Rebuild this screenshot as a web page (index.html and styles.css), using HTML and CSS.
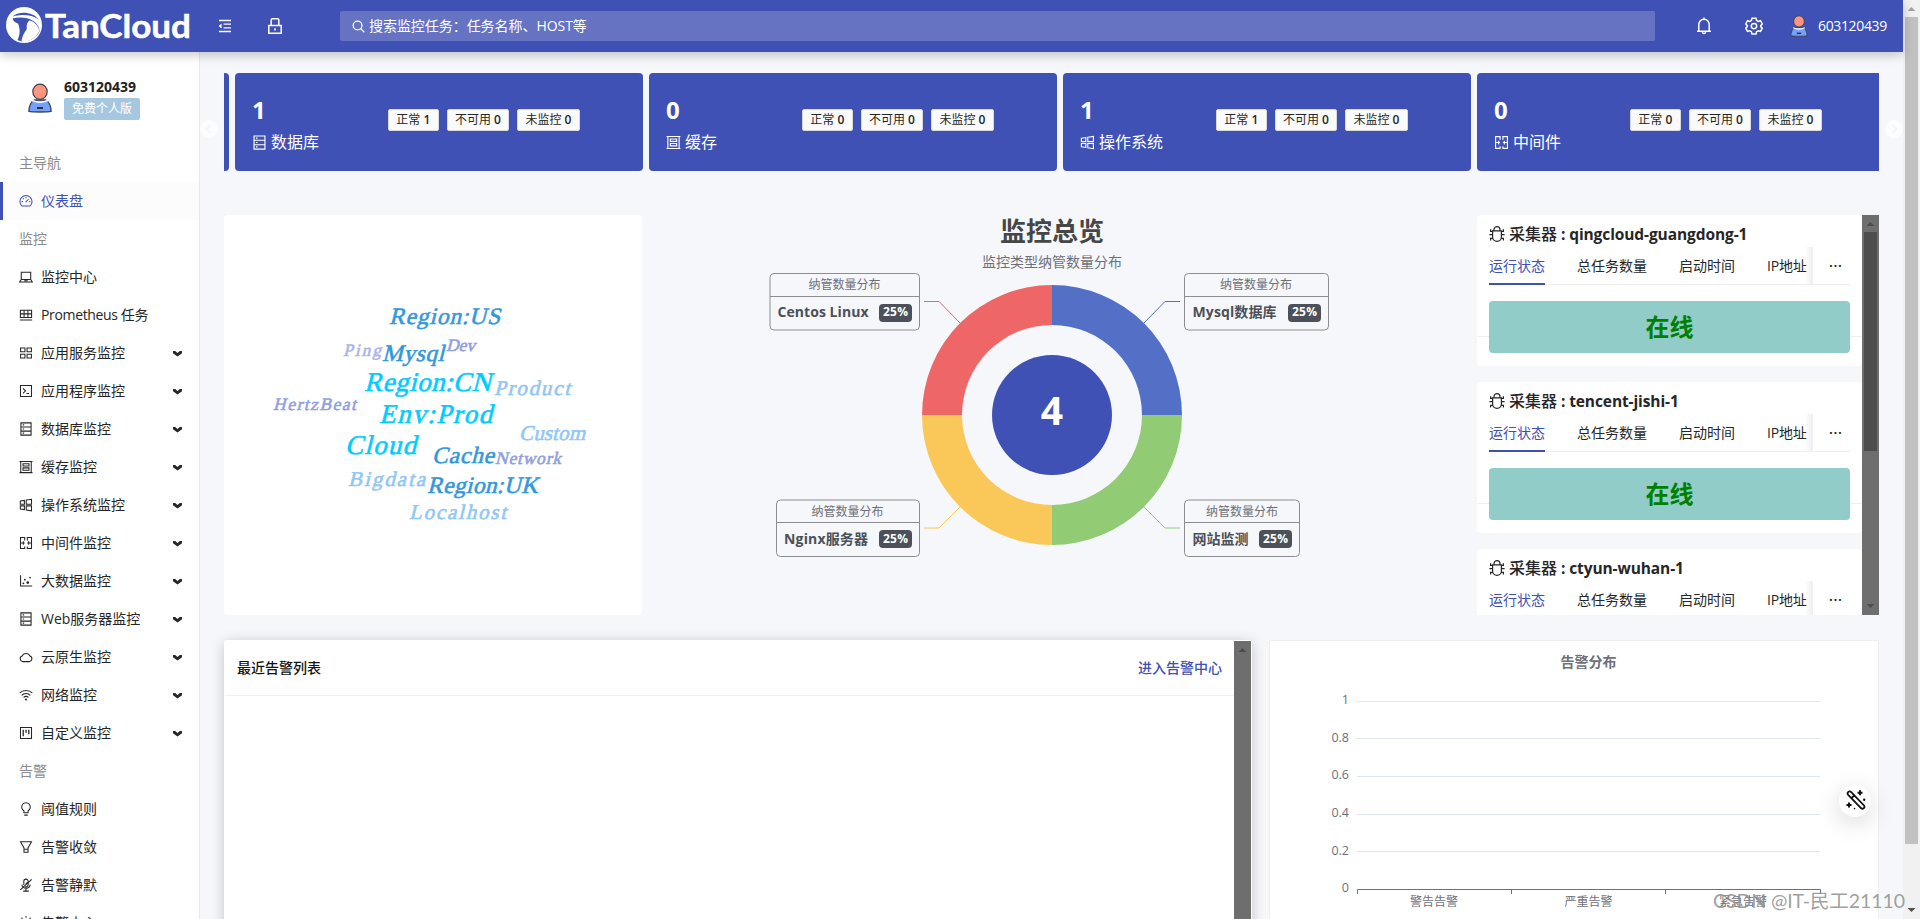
FILE: index.html
```html
<!DOCTYPE html>
<html lang="zh-CN">
<head>
<meta charset="utf-8">
<title>TanCloud</title>
<link rel="stylesheet" href="styles.css">
</head>
<body>
<svg class="defs" width="0" height="0">
  <defs>
    <symbol id="i-dash" viewBox="0 0 16 16"><path d="M3.3 13.7a6.9 6.9 0 1 1 9.4 0z"/><path d="M7.6 9.4 10.8 6M8 3.2v1.6M3 8.7h1.5M11.6 8.7H13M4.5 5l1 1"/></symbol>
    <symbol id="i-laptop" viewBox="0 0 16 16"><path d="M2.6 11V2.6h10.8V11M.8 13.6l1.8-2.7h10.8l1.8 2.7zM6 12.3h4"/></symbol>
    <symbol id="i-grid" viewBox="0 0 16 16"><path d="M1.6 2.6h12.8v8.2H1.6zM1.6 6.7h12.8M5.8 2.6v8.2M10.2 2.6v8.2M1 13.7h14"/></symbol>
    <symbol id="i-app" viewBox="0 0 16 16"><path d="M1.8 2.2h5v4.3h-5zM9.2 2.2h5v4.3h-5zM1.8 9.5h5v4.3h-5zM9.2 9.5h5v4.3h-5z"/></symbol>
    <symbol id="i-code" viewBox="0 0 16 16"><path d="M1.7 1.7h12.6v12.6H1.7zM4.5 5l3 2.8-3 2.8M8.500 10.800h3"/></symbol>
    <symbol id="i-db" viewBox="0 0 16 16"><path d="M2.2 1h11.6v14H2.2zM2.2 5.6h11.6M2.2 10.4h11.6M4.3 3.3h1.6M4.3 8h1.6M4.3 12.7h1.6"/></symbol>
    <symbol id="i-cache" viewBox="0 0 16 16"><path d="M2 1v14M14 1v14M.6 1.6h14.8M.6 14.4h14.8M4.6 4.2h6.8v2.6H4.6zM4.6 9h6.8v2.6H4.6z"/></symbol>
    <symbol id="i-win" viewBox="0 0 16 16"><path d="M1.5 3.400 6.200 2.700v4.400H1.500zM8.300 2.400l6-.9v5.600h-6zM1.500 9h4.700v4.300l-4.700-.7zM8.300 9h6v5.600l-6-.9z"/></symbol>
    <symbol id="i-mid" viewBox="0 0 16 16"><path d="M6.5 4V1.7H1.7v12.6h4.8V12M9.5 4V1.7h4.8v12.6H9.5V12M1.700 8h4.800M9.500 8h4.800M5 6v4M11 6v4M6.500 4v1M9.500 4v1"/></symbol>
    <symbol id="i-dot" viewBox="0 0 16 16"><path d="M1.8 1.5v12.3H15"/><g class="solid"><circle cx="5" cy="10.7" r="1.1"/><circle cx="6.7" cy="6.5" r="1"/><circle cx="10" cy="9.8" r="1.5"/><circle cx="12.6" cy="4" r="1"/></g></symbol>
    <symbol id="i-cloud" viewBox="0 0 16 16"><path d="M4.2 13.3a3.3 3.3 0 0 1-.6-6.4 4.8 4.8 0 0 1 8.9 0 3.3 3.3 0 0 1-.7 6.4z"/></symbol>
    <symbol id="i-wifi" viewBox="0 0 16 16"><path d="M.8 5.7a10.3 10.3 0 0 1 14.4 0M3 8.300a7.200 7.200 0 0 1 10 0M5.200 10.800a4.200 4.200 0 0 1 5.600 0"/><circle class="solid" cx="8" cy="13.2" r="1.2"/></symbol>
    <symbol id="i-proj" viewBox="0 0 16 16"><path d="M1.7 1.7h12.6v12.6H1.7z"/><path d="M4.800 4.300v7.400M8 4.300v3.500M11.200 4.300v5" stroke-width="1.5"/></symbol>
    <symbol id="i-bulb" viewBox="0 0 16 16"><path d="M5.600 12.200V10a4.900 4.900 0 1 1 4.800 0v2.200zM6 15h4"/></symbol>
    <symbol id="i-filter" viewBox="0 0 16 16"><path d="M1.7 2h12.6L10.3 9v5H5.700V9zM5.700 10.600h4.600"/></symbol>
    <symbol id="i-mute" viewBox="0 0 16 16"><path d="M5.500 8V3.800a2.500 2.500 0 0 1 5 0V7.500a2.500 2.500 0 0 1-3.500 2.400M3.300 7.600a4.800 4.800 0 0 0 9.500 0M8 12.300V15M4.800 15h6.400M14.500 1.500 1.500 13.500M7.500 7.200l2.600-2.600"/></symbol>
    <symbol id="i-alert" viewBox="0 0 16 16"><path d="M8 0v2M2.600 2l1.300 1.400M13.400 2l-1.300 1.400M3.500 13V9a4.500 4.500 0 0 1 9 0v4M1.500 13.600h13"/></symbol>
    <symbol id="i-bug" viewBox="0 0 16 16"><path d="M3.600 4.900h8.800v6a4.400 4.400 0 0 1-8.800 0zM5 4.800V3.600a3 3 0 0 1 6 0v1.200M.4 8.600h3.200M12.400 8.600h3.200M1.600 3.200v2.200h2M14.400 3.200v2.200h-2M1.600 14.600v-2.200h2.200M14.400 14.600v-2.200h-2.200"/></symbol>
    <symbol id="i-user" viewBox="0 0 24 30"><path d="M.9 28.400c0-5 2.300-10 5.300-11.400h11.600c3 1.400 5.300 6.400 5.300 11.400-3 .8-19.200.8-22.200 0z" fill="#73a1fb" stroke="#3d4450" stroke-width="1.300"/><path d="M4 17.500q8 3.500 16 0" stroke="#fff" stroke-width="1.600"/><ellipse cx="12" cy="8.700" rx="7.200" ry="7.600" fill="#ff9480" stroke="#3d4450" stroke-width="1.200"/><path d="M9 25h6" stroke="#2d3340" stroke-width="2"/></symbol>
  </defs>
</svg>

<div class="page">
  <div class="viewport">
    <header class="header">
      <svg class="logo" viewBox="0 0 200 52">
        <circle cx="24" cy="25" r="18" fill="#fff"/>
        <path d="M12.500 16.500C18 11 33 11 38.500 19.500 32 14.500 22 14 12.500 16.500z" fill="#4051b5"/>
        <path d="M12.500 18.500c6-1.500 13-1.500 19 1.500 5 2.700 8 6.500 8 11.500-2.500 4.500-6.500 8-12 9.300-4 .8-7.500.5-10-.8 2.500-4.500 3-11 .5-16.500-2.500-.8-5-2.200-5.500-5z" fill="#4051b5"/>
        <path d="M29.500 20.500c5 1.200 9 5 9.800 10.500-1.800 4-5.500 8-11.300 10-2.500.8-5 .4-6.500-.2.800-4.500 2.800-8.300 5-11.300.7-1-.2-2.500.3-4.500.5-2 1.200-3.500 2.700-4.500z" fill="#fff"/>
        <text class="logo-text" x="45" y="37.500" textLength="146" lengthAdjust="spacingAndGlyphs">TanCloud</text>
      </svg>
      <svg class="h-fold" viewBox="0 0 14 14"><path d="M1 1.500h12M5.500 5.200H13M5.500 8.800H13M1 12.500h12"/><path class="solid" d="M3.600 4.600v4.800L.6 7z"/></svg>
      <svg class="h-lock" viewBox="0 0 14 16"><path d="M.8 7.500h12.400v7.700H.8zM3.200 7.500V1.800q0-1 1-1h5.600q1 0 1 1v5.700M7 10.300v2.300"/></svg>
      <div class="search">
        <svg viewBox="0 0 14 14"><circle cx="6" cy="6" r="4.700"/><path d="m9.500 9.500 3.700 3.700"/></svg>
        <span>搜索监控任务：任务名称、HOST等</span>
      </div>
      <svg class="h-bell" viewBox="0 0 16 18"><path d="M1 14.300h14M2.800 14.300V7.500a5.200 5.200 0 0 1 10.400 0v6.800M8 .4v1.800M6.300 15.300a1.800 1.800 0 0 0 3.400 0"/></svg>
      <svg class="h-gear" viewBox="0 0 18 18"><path d="M7 1.200h4l.6 2.300 1.600.9 2.300-.7 1.800 3.300-1.600 1.600v1l1.600 1.600-1.800 3.200-2.300-.6-1.600.9-.6 2.300H7l-.6-2.300-1.600-.9-2.300.6L.7 11.200l1.600-1.600v-1L.7 7l1.800-3.300 2.300.7 1.600-.9z"/><circle cx="9" cy="9.100" r="2.700"/></svg>
      <svg class="h-user"><use href="#i-user"/></svg>
      <span class="h-name">603120439</span>
    </header>

    <div class="body">
      <aside class="sidebar">
        <div class="user">
          <svg><use href="#i-user"/></svg>
          <div>
            <div class="user-name">603120439</div>
            <div class="user-tag">免费个人版</div>
          </div>
        </div>
        <nav>
          <div class="group">主导航</div>
          <div class="item active"><svg><use href="#i-dash"/></svg>仪表盘</div>
          <div class="group">监控</div>
          <div class="item"><svg><use href="#i-laptop"/></svg>监控中心</div>
          <div class="item"><svg><use href="#i-grid"/></svg><span class="tight">Prometheus 任务</span></div>
          <div class="item sub"><svg><use href="#i-app"/></svg>应用服务监控</div>
          <div class="item sub"><svg><use href="#i-code"/></svg>应用程序监控</div>
          <div class="item sub"><svg><use href="#i-db"/></svg>数据库监控</div>
          <div class="item sub"><svg><use href="#i-cache"/></svg>缓存监控</div>
          <div class="item sub"><svg><use href="#i-win"/></svg>操作系统监控</div>
          <div class="item sub"><svg><use href="#i-mid"/></svg>中间件监控</div>
          <div class="item sub"><svg><use href="#i-dot"/></svg>大数据监控</div>
          <div class="item sub"><svg><use href="#i-db"/></svg>Web服务器监控</div>
          <div class="item sub"><svg><use href="#i-cloud"/></svg>云原生监控</div>
          <div class="item sub"><svg><use href="#i-wifi"/></svg>网络监控</div>
          <div class="item sub"><svg><use href="#i-proj"/></svg>自定义监控</div>
          <div class="group">告警</div>
          <div class="item"><svg><use href="#i-bulb"/></svg>阈值规则</div>
          <div class="item"><svg><use href="#i-filter"/></svg>告警收敛</div>
          <div class="item"><svg><use href="#i-mute"/></svg>告警静默</div>
          <div class="item"><svg><use href="#i-alert"/></svg>告警中心</div>
        </nav>
      </aside>

      <main class="content">
        <svg class="arrow arrow-l" viewBox="0 0 18 18"><circle cx="9" cy="9" r="9"/><path d="m10.500 5-4 4 4 4"/></svg>
        <svg class="arrow arrow-r" viewBox="0 0 18 18"><circle cx="9" cy="9" r="9"/><path d="m7.500 5 4 4-4 4"/></svg>
        <section class="stats">
          <div class="stat-edge"></div>
          <div class="stat">
            <div class="stat-main"><b>1</b><span><svg><use href="#i-db"/></svg>数据库</span></div>
            <div class="tags"><i>正常 <em>1</em></i><i>不可用 <em>0</em></i><i>未监控 <em>0</em></i></div>
          </div>
          <div class="stat">
            <div class="stat-main"><b>0</b><span><svg><use href="#i-cache"/></svg>缓存</span></div>
            <div class="tags"><i>正常 <em>0</em></i><i>不可用 <em>0</em></i><i>未监控 <em>0</em></i></div>
          </div>
          <div class="stat">
            <div class="stat-main"><b>1</b><span><svg><use href="#i-win"/></svg>操作系统</span></div>
            <div class="tags"><i>正常 <em>1</em></i><i>不可用 <em>0</em></i><i>未监控 <em>0</em></i></div>
          </div>
          <div class="stat">
            <div class="stat-main"><b>0</b><span><svg><use href="#i-mid"/></svg>中间件</span></div>
            <div class="tags"><i>正常 <em>0</em></i><i>不可用 <em>0</em></i><i>未监控 <em>0</em></i></div>
          </div>
        </section>

        <section class="overview">
          <svg class="cloud" viewBox="224 215 418 400">
            <g class="c-blue" font-size="23.500">
              <text transform="translate(389 323.500) skewX(-14)" textLength="111">Region:US</text>
              <text transform="translate(382 361) skewX(-14)" textLength="62">Mysql</text>
              <text transform="translate(432 463) skewX(-14)" textLength="62">Cache</text>
              <text transform="translate(427 493) skewX(-14)" textLength="111">Region:UK</text>
            </g>
            <g class="c-cyan" font-size="27">
              <text transform="translate(364 391) skewX(-14)" textLength="127">Region:CN</text>
              <text transform="translate(379 423) skewX(-14)" textLength="113">Env:Prod</text>
              <text transform="translate(345 454) skewX(-14)" textLength="71">Cloud</text>
            </g>
            <g class="c-light" font-size="21">
              <text transform="translate(494 395) skewX(-14)" textLength="76">Product</text>
              <text transform="translate(519 440) skewX(-14)" textLength="66">Custom</text>
              <text transform="translate(348 486) skewX(-14)" textLength="77">Bigdata</text>
              <text transform="translate(409 519) skewX(-14)" textLength="97">Localhost</text>
            </g>
            <g class="c-violet" font-size="17.500">
              <text class="c-pale" transform="translate(343 356) skewX(-14)" textLength="38">Ping</text>
              <text transform="translate(446 351) skewX(-14)" textLength="29">Dev</text>
              <text transform="translate(273 410) skewX(-14)" textLength="83">HertzBeat</text>
              <text transform="translate(495 464) skewX(-14)" textLength="66">Network</text>
            </g>
          </svg>

          <svg class="donut" viewBox="642 215 835 400">
            <text class="d-title" x="1052" y="240.500">监控总览</text>
            <text class="d-sub" x="1052" y="267">监控类型纳管数量分布</text>
            <path fill="#5470c6" d="M1052 285A130 130 0 0 1 1182 415H1142A90 90 0 0 0 1052 325z"/>
            <path fill="#91cc75" d="M1182 415A130 130 0 0 1 1052 545V505A90 90 0 0 0 1142 415z"/>
            <path fill="#fac858" d="M1052 545A130 130 0 0 1 922 415H962A90 90 0 0 0 1052 505z"/>
            <path fill="#ee6666" d="M922 415A130 130 0 0 1 1052 285V325A90 90 0 0 0 962 415z"/>
            <circle cx="1052" cy="415" r="60" fill="#4051b5"/>
            <text class="d-num" x="1052" y="425">4</text>
            <g fill="none">
              <path stroke="#ee6666" d="M924 301.500H939L960 323"/>
              <path stroke="#5470c6" d="M1180 301.500H1165L1144 323"/>
              <path stroke="#fac858" d="M924 528H939L960 507"/>
              <path stroke="#91cc75" d="M1180 528H1165L1144 507"/>
            </g>
            <g class="d-box">
              <rect x="770" y="273.500" width="149.500" height="56.500" rx="4"/><path d="M770 296.500h149.500"/>
              <rect x="1184.500" y="273.500" width="144" height="56.500" rx="4"/><path d="M1184.500 296.500h144"/>
              <rect x="776.500" y="500" width="143" height="56.500" rx="4"/><path d="M776.500 522.500h143"/>
              <rect x="1184.500" y="500" width="115" height="56.500" rx="4"/><path d="M1184.500 522.500h115"/>
            </g>
            <g class="d-head">
              <text x="844.500" y="289">纳管数量分布</text><text x="1256" y="289">纳管数量分布</text>
              <text x="847.500" y="515.500">纳管数量分布</text><text x="1242" y="515.500">纳管数量分布</text>
            </g>
            <g class="d-name">
              <text x="777.500" y="317" textLength="91">Centos Linux</text>
              <text x="1192.500" y="317" textLength="84">Mysql数据库</text>
              <text x="784" y="543.500" textLength="84">Nginx服务器</text>
              <text x="1192.500" y="543.500">网站监测</text>
            </g>
            <g fill="#4c5058">
              <rect x="879" y="304" width="33" height="18" rx="4"/><rect x="1288" y="304" width="33" height="18" rx="4"/>
              <rect x="879" y="530" width="33" height="18" rx="4"/><rect x="1259" y="530" width="33" height="18" rx="4"/>
            </g>
            <g class="d-pct">
              <text x="895.500" y="316.300" textLength="25">25%</text><text x="1304.500" y="316.300" textLength="25">25%</text>
              <text x="895.500" y="542.500" textLength="25">25%</text><text x="1275.500" y="542.500" textLength="25">25%</text>
            </g>
          </svg>

          <div class="collectors">
            <div class="c-list">
              <article class="collector">
                <h3><svg><use href="#i-bug"/></svg>采集器<strong> : qingcloud-guangdong-1</strong></h3>
                <div class="tabs"><span class="on">运行状态</span><span>总任务数量</span><span>启动时间</span><span class="last">IP地址</span><u>···</u></div>
                <div class="state">在线</div>
              </article>
              <article class="collector">
                <h3><svg><use href="#i-bug"/></svg>采集器<strong> : tencent-jishi-1</strong></h3>
                <div class="tabs"><span class="on">运行状态</span><span>总任务数量</span><span>启动时间</span><span class="last">IP地址</span><u>···</u></div>
                <div class="state">在线</div>
              </article>
              <article class="collector">
                <h3><svg><use href="#i-bug"/></svg>采集器<strong> : ctyun-wuhan-1</strong></h3>
                <div class="tabs"><span class="on">运行状态</span><span>总任务数量</span><span>启动时间</span><span class="last">IP地址</span><u>···</u></div>
              </article>
            </div>
            <div class="bar bar-dark"><i class="up"></i><b class="thumb-list"></b><i class="down"></i></div>
          </div>
        </section>

        <section class="alerts">
          <div class="recent">
            <div class="recent-main">
              <div class="recent-head"><span>最近告警列表</span><a>进入告警中心</a></div>
            </div>
            <div class="bar bar-dark"><i class="up"></i></div>
          </div>
          <svg class="chart" viewBox="1269 640 610 300">
            <rect x="1269.500" y="640.500" width="609" height="310" fill="#fff" stroke="#eeeff1"/>
            <text class="ch-title" x="1588.500" y="667">告警分布</text>
            <path stroke="#e0e6f1" d="M1357 701.500h463M1357 738.500h463M1357 776.500h463M1357 814.500h463M1357 851.500h463"/>
            <path stroke="#6e7079" fill="none" d="M1357.500 894v-4.500H1820.500v4.500M1511.500 889.500v4.500M1665.500 889.500v4.500"/>
            <g class="ch-y">
              <text x="1349" y="704">1</text><text x="1349" y="742">0.8</text><text x="1349" y="779">0.6</text>
              <text x="1349" y="817">0.4</text><text x="1349" y="855">0.2</text><text x="1349" y="892">0</text>
            </g>
            <g class="ch-x">
              <text x="1434" y="906">警告告警</text><text x="1588.500" y="906">严重告警</text><text x="1743" y="906">紧急告警</text>
            </g>
          </svg>
        </section>
      </main>
    </div>
  </div>
  <div class="bar bar-page"><i class="up"></i><b class="thumb-page"></b><i class="down"></i></div>

  <div class="wand"><svg viewBox="0 0 20 20"><path d="M2.200 4.800a2 2 0 0 1 3-2.700L18 15.500a2 2 0 0 1-2.800 2.800zM5.500 8.200 8.300 5.300" stroke-width="1.800"/><path d="M14 .2v5M11.500 2.700h5M3 12.500v5M.5 15h5" stroke-width="2"/><circle class="solid" cx="18.200" cy="9.800" r="1.200"/><circle class="solid" cx="8.500" cy="18.600" r=".8"/></svg></div>
  <svg class="mark" viewBox="0 0 200 30"><text x="4" y="21.500" textLength="192">CSDN @IT-民工21110</text></svg>
</div>
</body>
</html>
```
FILE: styles.css
```css
* { box-sizing: border-box; }
body {
  margin: 0;
  font: 14px/22px "Open Sans", "Noto Sans CJK SC", sans-serif;
  color: #262626;
  background: #f5f7fb;
  overflow: hidden;
}
.defs { position: absolute; }
svg { display: block; flex: none; fill: none; stroke: currentColor; stroke-width: 1.2; }
svg text { stroke: none; }
.solid { fill: currentColor; stroke: none; }
.page { display: flex; position: relative; width: 1920px; height: 919px; overflow: hidden; }
.viewport { width: 1903px; display: flex; flex-direction: column; }

/* header */
.header {
  position: relative; z-index: 2; height: 52px; flex: none;
  display: flex; align-items: center;
  background: #4051b5; color: #fff;
  box-shadow: 0 3px 10px rgba(0, 0, 0, .22);
}
.logo { width: 200px; height: 52px; stroke: none; }
.logo-text { font: 700 33px Lato, "Open Sans", sans-serif; fill: #fff; }
.logo .logo-text { stroke: #fff; stroke-width: .5; }
.h-fold { width: 14px; height: 14px; margin-left: 18px; stroke-width: 1.3; }
.h-lock { width: 14px; height: 16px; margin-left: 36px; stroke-width: 1.5; }
.search {
  width: 1315px; height: 30px; margin-left: 58px; padding-left: 12px;
  display: flex; align-items: center; gap: 4px;
  background: rgba(255, 255, 255, .2); border-radius: 2px;
}
.search svg { width: 13px; height: 13px; stroke-width: 1.4; }
.search span { letter-spacing: -.05px; }
.h-bell { width: 16px; height: 18px; margin-left: 41px; stroke-width: 1.5; }
.h-gear { width: 18px; height: 18px; margin-left: 33px; stroke-width: 1.5; }
.h-user { width: 18px; height: 22px; margin-left: 27px; }
.h-name { margin-left: 10px; letter-spacing: -.35px; }

.body { flex: 1; display: flex; min-height: 0; }

/* sidebar */
.sidebar { width: 200px; background: #fff; border-right: 1px solid #ece6ea; overflow: hidden; flex: none; }
.user { display: flex; height: 92px; padding: 24px 0 0 28px; gap: 12px; }
.user > svg { width: 24px; height: 30px; margin-top: 7px; }
.user-name { font-weight: 700; letter-spacing: 0; color: #222; }
.user-tag {
  width: 76px; height: 22px; text-align: center;
  font-size: 12px; font-weight: 400; line-height: 22px; color: #fff;
  background: #a5c8e0; border-radius: 2px;
}
.group { height: 38px; padding-left: 19px; line-height: 38px; color: #8c8c8c; }
.item { height: 38px; padding-left: 19px; display: flex; align-items: center; }
.item svg { width: 14px; height: 14px; margin-right: 8px; }
.tight { letter-spacing: -.35px; }
.item.active { padding-left: 16px; border-left: 3px solid #4051b5; background: #fcfcfc; color: #4051b5; }
.sub::after {
  content: ""; width: 9px; height: 6px; margin: 1px 17px 0 auto;
  background: #262626;
  clip-path: polygon(0 12%, 18% 0, 50% 42%, 82% 0, 100% 12%, 100% 45%, 50% 100%, 0 45%);
}

/* content */
.content { position: relative; flex: 1; padding: 21px 24px 0; overflow: hidden; }
.arrow { position: absolute; top: 68px; width: 18px; height: 18px; }
.arrow circle { fill: #fcfdfe; stroke: none; }
.arrow path { stroke: #f3f5f8; stroke-width: 2; }
.arrow-l { left: 0; }
.arrow-r { right: 0; }
.stats { display: flex; gap: 6px; height: 98px; overflow: hidden; }
.stat-edge { width: 5px; flex: none; background: #4051b5; border-radius: 0 4px 4px 0; }
.stat { width: 408px; flex: none; display: flex; align-items: center; background: #4051b5; color: #fff; border-radius: 4px; }
.stat:last-child { width: 402px; border-radius: 4px 0 0 4px; }
.stat-main { width: 153px; padding: 5px 0 0 17px; }
.stat-main b { display: block; font-size: 24px; line-height: 35px; }
.stat-main span { display: flex; align-items: center; height: 31px; gap: 4px; font-size: 16px; }
.stat-main svg { width: 15px; height: 15px; }
.tags { display: flex; gap: 8px; margin-top: -4px; }
.tags i {
  padding: 0 7.300px; font-size: 12px; line-height: 20px; font-style: normal;
  color: #262626; background: #fafafa; border: 1px solid #d9d9d9; border-radius: 2px;
}
.tags em { font-style: normal; font-weight: 600; }

.overview { display: flex; height: 400px; margin-top: 44px; }
.cloud { width: 418px; height: 400px; background: #fff; border-radius: 4px; }
.cloud text { font-family: "Liberation Serif", serif; stroke: currentColor; stroke-width: .6; fill: currentColor; }
.c-blue { color: #3398db; }
.c-cyan { color: #00ccff; }
.c-light { color: #91c7f3; }
.c-violet { color: #929fdf; }
.c-pale { color: #abb4e8; }

.donut { width: 835px; height: 400px; stroke: none; overflow: visible; }
.donut text { text-anchor: middle; fill: #6e7079; }
.donut .d-title { font-size: 26px; font-weight: 700; fill: #464646; }
.d-sub { font-size: 14px; }
.donut .d-num { font-size: 39px; font-weight: 700; fill: #fff; }
.donut path[stroke] { stroke-width: 1; }
.d-box { fill: none; stroke: #8c8d8e; stroke-width: 1; }
.d-head { font-size: 12px; }
.donut .d-name text { text-anchor: start; font-size: 14px; font-weight: 700; fill: #4c5058; }
.donut .d-pct text { font-size: 12px; font-weight: 700; fill: #fff; }

.collectors { width: 402px; height: 400px; display: flex; overflow: hidden; }
.c-list { width: 385px; display: flex; flex-direction: column; gap: 16px; }
.collector { height: 151px; flex: none; padding: 5px 12px 0; border-radius: 4px; background: linear-gradient(#f0f0f0, #f0f0f0) 0 121px / 100% 1px no-repeat #fff; }
.collector h3 {
  display: flex; align-items: center; height: 27px; margin: 0;
  font-size: 16px; font-weight: 500; white-space: pre;
}
.collector h3 strong { font-size: 15.500px; font-weight: 700; letter-spacing: -.1px; }
.collector h3 svg { width: 16px; height: 16px; margin-right: 4px; }
.tabs { display: flex; height: 38px; border-bottom: 1px solid #f0f0f0; line-height: 38px; }
.tabs span { margin-right: 32px; }
.tabs .on { height: 38px; color: #4051b5; border-bottom: 2px solid #4051b5; }
.tabs .last { width: 46px; margin: 0; white-space: nowrap; letter-spacing: -.2px; background: linear-gradient(90deg, #fff 82%, #eee); }
.tabs u { margin-left: 16px; text-decoration: none; font-weight: 600; letter-spacing: .7px; }
.state {
  height: 52px; margin-top: 16px; border-radius: 4px; background: #91ccc9;
  font-size: 24px; font-weight: 700; line-height: 52px; text-align: center; color: green;
}

/* scroll bars */
.bar { width: 17px; flex: none; display: flex; flex-direction: column; align-items: center; }
.bar .up, .bar .down { width: 8px; height: 4px; }
.bar .up { margin-top: 7px; clip-path: polygon(50% 0, 100% 100%, 0 100%); }
.bar .down { margin: auto 0 7px; clip-path: polygon(0 0, 100% 0, 50% 100%); }
.bar-dark { background: #6e6e6e; }
.bar-dark i { background: #4d4d4d; }
.thumb-list { width: 13px; height: 219px; margin-top: 6px; background: #4d4d4d; }
.bar-page { background: #f1f1f1; }
.bar-page .up { background: #a3a3a3; }
.bar-page .down { background: #505050; }
.thumb-page { width: 13px; height: 827px; margin-top: 6px; background: #c1c1c1; }

.alerts { display: flex; gap: 17px; height: 300px; margin-top: 25px; }
.recent { width: 1028px; display: flex; padding: 1px; background: #fff; border-radius: 3px; box-shadow: 0 2px 14px rgba(0, 0, 0, .2); }
.recent-main { flex: 1; }
.recent-head { display: flex; justify-content: space-between; height: 55px; padding: 0 12px; line-height: 54px; font-weight: 500; color: #141414; border-bottom: 1px solid #f0f0f0; }
.recent-head a { color: #4051b5; }
.chart { width: 610px; height: 300px; stroke-width: 1; }
.chart text { fill: #6e7079; font-size: 12px; text-anchor: middle; }
.chart .ch-title { font-size: 14px; font-weight: 700; }
.chart .ch-y text { text-anchor: end; font-size: 12.500px; }

/* floating items */
.wand {
  position: absolute; left: 1839px; top: 785px; width: 32px; height: 32px; padding: 5px 5px 0 7px;
  border-radius: 50%; background: #fff; color: #111; box-shadow: 0 6px 24px rgba(0, 0, 0, .16);
}
.wand svg { width: 20px; height: 20px; }
.mark { position: absolute; left: 1709px; top: 886px; width: 200px; height: 30px; }
.mark text { font-size: 19.500px; fill: #8e8e8e; fill-opacity: .85; font-family: Lato, "Noto Sans CJK SC", sans-serif; }
```
